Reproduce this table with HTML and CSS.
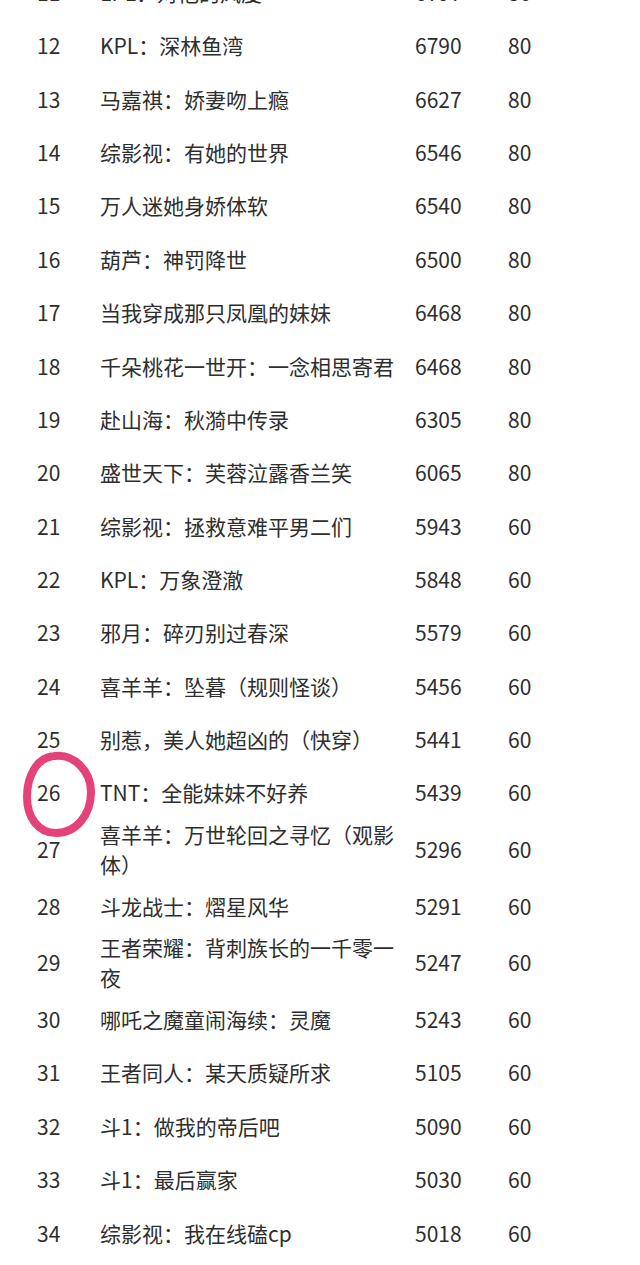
FILE: index.html
```html
<!DOCTYPE html>
<html lang="zh-CN">
<head>
<meta charset="utf-8">
<title>排行</title>
<link rel="stylesheet" href="styles.css">
</head>
<body>
<div class="table">
  <div class="row"><div class="num">11</div><div class="title">LPL：对他的风度</div><div class="views">6797</div><div class="score">80</div></div>
  <div class="row"><div class="num">12</div><div class="title">KPL：深林鱼湾</div><div class="views">6790</div><div class="score">80</div></div>
  <div class="row"><div class="num">13</div><div class="title">马嘉祺：娇妻吻上瘾</div><div class="views">6627</div><div class="score">80</div></div>
  <div class="row"><div class="num">14</div><div class="title">综影视：有她的世界</div><div class="views">6546</div><div class="score">80</div></div>
  <div class="row"><div class="num">15</div><div class="title">万人迷她身娇体软</div><div class="views">6540</div><div class="score">80</div></div>
  <div class="row"><div class="num">16</div><div class="title">葫芦：神罚降世</div><div class="views">6500</div><div class="score">80</div></div>
  <div class="row"><div class="num">17</div><div class="title">当我穿成那只凤凰的妹妹</div><div class="views">6468</div><div class="score">80</div></div>
  <div class="row"><div class="num">18</div><div class="title">千朵桃花一世开：一念相思寄君</div><div class="views">6468</div><div class="score">80</div></div>
  <div class="row"><div class="num">19</div><div class="title">赴山海：秋漪中传录</div><div class="views">6305</div><div class="score">80</div></div>
  <div class="row"><div class="num">20</div><div class="title">盛世天下：芙蓉泣露香兰笑</div><div class="views">6065</div><div class="score">80</div></div>
  <div class="row"><div class="num">21</div><div class="title">综影视：拯救意难平男二们</div><div class="views">5943</div><div class="score">60</div></div>
  <div class="row"><div class="num">22</div><div class="title">KPL：万象澄澈</div><div class="views">5848</div><div class="score">60</div></div>
  <div class="row"><div class="num">23</div><div class="title">邪月：碎刃别过春深</div><div class="views">5579</div><div class="score">60</div></div>
  <div class="row"><div class="num">24</div><div class="title">喜羊羊：坠暮（规则怪谈）</div><div class="views">5456</div><div class="score">60</div></div>
  <div class="row"><div class="num">25</div><div class="title">别惹，美人她超凶的（快穿）</div><div class="views">5441</div><div class="score">60</div></div>
  <div class="row"><div class="num marked">26<svg class="ring" viewBox="0 0 82 96" width="82" height="96" aria-hidden="true"><path d="M37,9 C56,7 73,24 73,45 C73,68 58,86 38,86 C20,86 9,70 9,50 C9,29 19,12 33,9.5" fill="none" stroke="#e6427a" stroke-width="8" stroke-linecap="round"/></svg></div><div class="title">TNT：全能妹妹不好养</div><div class="views">5439</div><div class="score">60</div></div>
  <div class="row"><div class="num">27</div><div class="title">喜羊羊：万世轮回之寻忆（观影体）</div><div class="views">5296</div><div class="score">60</div></div>
  <div class="row"><div class="num">28</div><div class="title">斗龙战士：熠星风华</div><div class="views">5291</div><div class="score">60</div></div>
  <div class="row"><div class="num">29</div><div class="title">王者荣耀：背刺族长的一千零一夜</div><div class="views">5247</div><div class="score">60</div></div>
  <div class="row"><div class="num">30</div><div class="title">哪吒之魔童闹海续：灵魔</div><div class="views">5243</div><div class="score">60</div></div>
  <div class="row"><div class="num">31</div><div class="title">王者同人：某天质疑所求</div><div class="views">5105</div><div class="score">60</div></div>
  <div class="row"><div class="num">32</div><div class="title">斗1：做我的帝后吧</div><div class="views">5090</div><div class="score">60</div></div>
  <div class="row"><div class="num">33</div><div class="title">斗1：最后赢家</div><div class="views">5030</div><div class="score">60</div></div>
  <div class="row"><div class="num">34</div><div class="title">综影视：我在线磕cp</div><div class="views">5018</div><div class="score">60</div></div>
</div>
</body>
</html>
```

FILE: styles.css
```css
html, body {
  margin: 0;
  padding: 0;
  background: #ffffff;
}

body {
  font-family: "Noto Sans CJK SC", "Noto Sans", sans-serif;
  font-size: 21px;
  color: #2e2e2e;
  overflow: hidden;
}

.table {
  margin-top: -34.7px;
  padding-left: 37px;
  display: flex;
  flex-direction: column;
}

.row {
  display: grid;
  grid-template-columns: 63px 315px 93px 1fr;
  align-items: center;
  min-height: 53.36px;
  line-height: 30px;
}

.title {
  padding-right: 18px;
}

.num.marked {
  position: relative;
}

.ring {
  position: absolute;
  left: -19px;
  top: -30px;
  pointer-events: none;
}
```
